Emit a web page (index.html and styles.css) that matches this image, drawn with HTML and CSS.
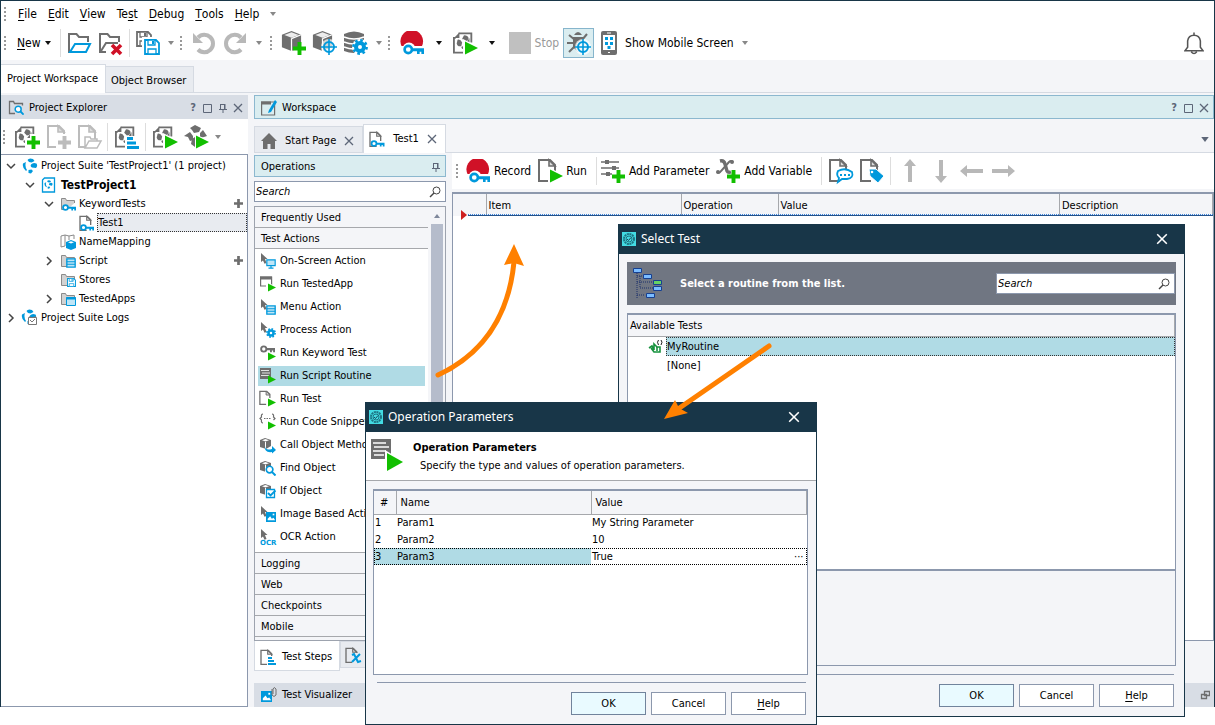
FILE: index.html
```html
<!DOCTYPE html>
<html lang="en">
<head>
<meta charset="utf-8">
<title>TestProject1</title>
<link rel="stylesheet" href="styles.css">
</head>
<body>
<svg class="sprite" aria-hidden="true">
  <defs>
    <symbol id="doc" viewBox="0 0 24 24"><path d="M13 23H3V2h11l5 5v8" fill="none" stroke="currentColor" stroke-width="2"/><path d="M13 2v6h6z" fill="#ddd" stroke="currentColor" stroke-width="1.600"/></symbol>
    <symbol id="key" viewBox="0 0 24 12"><circle cx="6" cy="6" r="4.200" fill="#fff" stroke="currentColor" stroke-width="3"/><path d="M10 4.500h14V11h-3V8.500h-2V11h-3V8h-6z" fill="currentColor"/></symbol>
    <symbol id="play" viewBox="0 0 12 12"><path d="M0 0l12 6-12 6z" fill="#12bf00"/></symbol>
    <symbol id="plus" viewBox="0 0 12 12"><path d="M6 0v12M0 6h12" stroke="currentColor" stroke-width="3.600"/></symbol>
    <symbol id="cube" viewBox="0 0 24 24"><path d="M2 6l10-4 10 4v13l-10 4-10-4z" fill="#6e6e6e"/><path d="M4.500 6.300L12 3.500l7.500 2.800L12 9.200z" fill="#ececec"/><path d="M12 10v13M12 10l10-4" stroke="#fff" stroke-width="1.300"/></symbol>
    <symbol id="target" viewBox="0 0 16 16"><circle cx="8" cy="8" r="8" fill="#fff" opacity=".7"/><circle cx="8" cy="8" r="5" fill="none" stroke="#0099dc" stroke-width="2"/><path d="M8 0v16M0 8h16" stroke="#0099dc" stroke-width="1.600"/></symbol>
    <symbol id="gear" viewBox="0 0 16 16"><circle cx="8" cy="8" r="4" fill="#fff" stroke="#0099dc" stroke-width="4"/><circle cx="8" cy="8" r="6.600" fill="none" stroke="#0099dc" stroke-width="2.600" stroke-dasharray="2.600 2.580"/></symbol>
    <symbol id="folder" viewBox="0 0 24 24"><path d="M21 11V6H12L9.500 3H2v18h6" fill="none" stroke="#6e6e6e" stroke-width="2"/></symbol>
    <symbol id="folder-s" viewBox="0 0 16 16"><path d="M7 13.500H1.500v-11h4l1 2h8V7" fill="#d2d2d2" stroke="#8a8a8a"/></symbol>
    <symbol id="disk" viewBox="0 0 16 16"><path d="M1 1h11l3 3v11H1z" fill="#fff" stroke="currentColor" stroke-width="1.800"/><path d="M4 1h7v5H4zM4 10h8v5H4z" fill="#fff" stroke="currentColor" stroke-width="1.300"/><path d="M8 2h2v3H8z" fill="currentColor"/></symbol>
    <symbol id="suite" viewBox="0 0 24 24"><path d="M11 23H1V7h2M6 2h14v10" fill="none" stroke="#6e6e6e" stroke-width="2"/><path d="M1 7l6-6v6zM12 4q5 0 5 4-1 3-4 3l-3-3zM5 9q3-1 5 3l-1 4q-4 1-5-3zM16 10l2-3v5l-3 3-2-1zM9 17l4-2v3l-3 1z" fill="#6e6e6e"/></symbol>
    <symbol id="swirl" viewBox="0 0 16 16"><path d="M5.500 2Q7-.5 11 1l1.500 2-3 1.500L7 4zM1 5.500L4 4q-1.500 4 1 8l-1 1Q0 10 1 5.500zM9 6.500Q11 4 14.500 5.500 16 8 14 10l-4-.5q-2-1-1-3zM6.500 12l3-.5L11 13l-2 2.500-2.500-.5z" fill="#0099dc"/></symbol>
    <symbol id="cursor" viewBox="0 0 16 16"><path d="M1 0l6.500 6H5l1.500 4-2 .7L3 7.500 1 9z" fill="#6e6e6e"/></symbol>
    <symbol id="scube" viewBox="0 0 16 16"><path d="M0 3l5-2 6 2v6l-5 3-6-2z" fill="#6e6e6e"/><path d="M2 3.200L5.500 2l3.500 1.200L5.500 4.500z" fill="#fff"/><path d="M5.500 5v7" stroke="#fff"/></symbol>
    <symbol id="lines" viewBox="0 0 16 16"><path d="M0 0h11v11H0z" fill="#6e6e6e"/><path d="M1 2.500h8M2 5h8M1 7.500h8" stroke="#fff" stroke-width=".8"/></symbol>
    <symbol id="steps" viewBox="0 0 12 12"><path d="M0 1.500h6M0 6h9M0 10.500h12" stroke="#0099dc" stroke-width="3"/></symbol>
    <symbol id="glass" viewBox="0 0 12 12"><circle cx="7.500" cy="4.500" r="3.500" fill="none" stroke="currentColor"/><path d="M5 7l-4 4" stroke="currentColor" stroke-width="1.500"/></symbol>
    <symbol id="find" viewBox="0 0 12 12"><circle cx="5" cy="5" r="3.600" fill="#fff" stroke="#0099dc" stroke-width="1.800"/><path d="M7.500 7.500l4 4" stroke="#0099dc" stroke-width="2.200"/></symbol>
    <symbol id="record" viewBox="0 0 24 24"><path d="M1.500 15A11.300 11.300 0 1 1 22 15z" fill="#d01127"/><path d="M1 15h22v4H1z" fill="#fff"/><circle cx="9" cy="18" r="6.500" fill="#fff"/><g color="#0099dc"><use href="#key" x="3" y="13" width="21" height="11"/></g></symbol>
    <symbol id="down" viewBox="0 0 6 4"><path d="M0 0h6L3 4z" fill="currentColor"/></symbol>
    <symbol id="x" viewBox="0 0 10 10"><path d="M1 1l8 8M9 1L1 9" stroke="currentColor" stroke-width="1.300"/></symbol>
    <symbol id="box" viewBox="0 0 10 10"><path d="M.5 1.500h8v8h-8z" fill="none" stroke="currentColor"/></symbol>
    <symbol id="pin" viewBox="0 0 10 10"><path d="M2.500 1v5M1 6.500h8M3 1.500h4M5 7v3" stroke="currentColor" fill="none"/><path d="M6 1h1.500v5H6z" fill="currentColor"/></symbol>
    <symbol id="chev" viewBox="0 0 10 10"><path d="M1 3l4 4 4-4" fill="none" stroke="#444" stroke-width="1.500"/></symbol>
    <symbol id="chev-r" viewBox="0 0 10 10"><path d="M3 1l4 4-4 4" fill="none" stroke="#444" stroke-width="1.500"/></symbol>
    <symbol id="app" viewBox="0 0 16 16"><path d="M1 1h14v14H1z" fill="#43dbe3"/><circle cx="8" cy="8" r="5" fill="none" stroke="#1d7483" stroke-width="2" stroke-dasharray="2 .6"/><circle cx="8" cy="8" r="3" fill="none" stroke="#1d7483"/><path d="M6 8l1.500 1.500L10 6.500" fill="none" stroke="#17475a"/></symbol>
    <symbol id="arrow" viewBox="0 0 24 24"><path d="M12 0l6 7h-4v16h-4V7H6z" fill="#b8b8b8"/></symbol>
    <symbol id="undo" viewBox="0 0 24 24"><path d="M6 6.500a8.700 8.700 0 1 1 0 12" fill="none" stroke="#b8b8b8" stroke-width="4"/><path d="M1 2v10h10z" fill="#b8b8b8"/></symbol>
    <symbol id="monitor" viewBox="0 0 12 12"><path d="M1 1h10v7H1z" fill="#bfe5f6" stroke="#0099dc" stroke-width="1.400"/><path d="M6 8v3M3 11h6" stroke="#0099dc" stroke-width="1.400"/></symbol>
    <symbol id="list" viewBox="0 0 12 12"><path d="M1 1h10v10H1z" fill="#bfe5f6" stroke="#0099dc" stroke-width="1.600"/><path d="M1 4.500h10M1 7.500h10" stroke="#0099dc" stroke-width="1.400"/></symbol>
    <symbol id="picture" viewBox="0 0 12 12"><path d="M0 0h12v12H0z" fill="#0099dc"/><path d="M2 8l3-3 2 3 2-1 2 3H2z" fill="#fff"/><path d="M8 2h2v2H8z" fill="#fff"/></symbol>
  </defs>
</svg>

<div class="app">
  <nav class="menubar" aria-label="Main menu">
    <span class="grip"></span>
    <button><u>F</u>ile</button><button><u>E</u>dit</button><button><u>V</u>iew</button><button>Te<u>s</u>t</button><button><u>D</u>ebug</button><button><u>T</u>ools</button><button><u>H</u>elp</button>
    <button class="caret muted" aria-label="More"><svg><use href="#down"/></svg></button>
  </nav>

  <div class="toolbar main-bar" role="toolbar">
    <span class="grip"></span>
    <button class="new"><span><u>N</u>ew</span><svg class="dn"><use href="#down"/></svg></button>
    <span class="sep"></span>
    <button class="ib" aria-label="Open"><svg class="i24"><use href="#folder"/><path d="M3 21l5-8h15l-4 8z" fill="#fff" stroke="#0099dc" stroke-width="2"/></svg></button>
    <button class="ib" aria-label="Close"><svg class="i24"><use href="#folder"/><path d="M3 20l5-8h12" fill="none" stroke="#6e6e6e" stroke-width="2"/><path d="M14 14l9 9M23 14l-9 9" stroke="#d01127" stroke-width="3.600"/></svg></button>
    <span class="sep"></span>
    <button class="ib" aria-label="Save all"><svg class="i24"><g color="#6e6e6e"><use href="#disk" width="16" height="16"/></g><path d="M6 6h18v18H6z" fill="#fff"/><g color="#0099dc"><use href="#disk" x="8" y="8" width="16" height="16"/></g></svg></button>
    <button class="caret muted" aria-label="More"><svg><use href="#down"/></svg></button>
    <span class="grip"></span>
    <button class="ib" aria-label="Undo"><svg class="i24"><use href="#undo"/></svg></button>
    <button class="ib" aria-label="Redo"><svg class="i24 flip"><use href="#undo"/></svg></button>
    <button class="caret muted mid" aria-label="More"><svg><use href="#down"/></svg></button>
    <span class="grip"></span>
    <button class="ib" aria-label="Add object"><svg class="i24 green"><use href="#cube" x="-2" y="-2" width="23" height="23"/><use href="#plus" x="11" y="11" width="13" height="13"/></svg></button>
    <button class="ib" aria-label="Object spy"><svg class="i24"><use href="#cube" x="-2" y="-2" width="23" height="23"/><use href="#target" x="8" y="8" width="16" height="16"/></svg></button>
    <button class="ib" aria-label="Data options"><svg class="i24"><path d="M0 3q10-5 20 0v17q-10 4-20 0z" fill="#6e6e6e"/><path d="M0 6q10 4 20 0M0 11q10 4 20 0M0 16q10 4 20 0" fill="none" stroke="#fff" stroke-width="1.500"/><circle cx="16" cy="16" r="8" fill="#fff"/><use href="#gear" x="8" y="8" width="16" height="16"/></svg></button>
    <button class="caret muted" aria-label="More"><svg><use href="#down"/></svg></button>
    <span class="grip"></span>
    <button class="ib" aria-label="Record"><svg class="i24"><use href="#record"/></svg></button>
    <button class="caret wide" aria-label="Record options"><svg><use href="#down"/></svg></button>
    <button class="ib" aria-label="Run"><svg class="i24"><use href="#suite" x="0" y="0" width="22" height="23"/><path d="M10 8l16 8-16 9z" fill="#fff"/><use href="#play" x="12" y="10" width="13" height="14"/></svg></button>
    <button class="caret wide" aria-label="Run options"><svg><use href="#down"/></svg></button>
    <button class="stop" disabled><span class="square"></span>Stop</button>
    <button class="toggle" aria-label="Debugging" aria-pressed="true"><svg class="i24"><path d="M7 4q4-6 8 0zM6 6h10v10l-5 5-5-5z" fill="#6e6e6e"/><path d="M2 4l6 5M0 12h8M2 21l6-6M20 3l-5 6" stroke="#6e6e6e" stroke-width="2"/><circle cx="16" cy="16" r="7" fill="#daedf0"/><use href="#target" x="8" y="8" width="16" height="16"/></svg></button>
    <button class="mobile"><svg class="phone" viewBox="0 0 16 24"><rect width="16" height="24" rx="2" fill="#6e6e6e"/><path d="M2 4h12v15H2z" fill="#fff"/><path d="M6 2h4M7 21.500h2" stroke="#fff"/><path d="M4 6h3v3H4zM9 6h3v3H9zM4 11h3v3H4zM9 11h3v3H9zM6.500 15h3v3h-3z" fill="#0099dc"/></svg>Show Mobile Screen</button>
    <button class="caret muted wide" aria-label="More"><svg><use href="#down"/></svg></button>
    <button class="bell" aria-label="Notifications"><svg viewBox="0 0 22 24"><path d="M1 20h20l-3-4V9q-1-6-7-6T4 9v7zM11 3V0M8 21q3 4 6 0" fill="none" stroke="#555" stroke-width="1.700"/></svg></button>
  </div>

  <div class="view-tabs" role="tablist">
    <button class="vtab active" role="tab" aria-selected="true">Project Workspace</button>
    <button class="vtab" role="tab" aria-selected="false">Object Browser</button>
  </div>

  <div class="body">
    <aside class="explorer">
      <header class="phead">
        <svg class="i16"><path d="M7 13.500H1.500v-12h4l1 2h8v2" fill="none" stroke="#6e6e6e" stroke-width="1.300"/><use href="#find" x="6" y="5" width="10" height="10"/></svg>
        <h2>Project Explorer</h2>
        <span class="tools"><button aria-label="Help"><b>?</b></button><button aria-label="Maximize"><svg><use href="#box"/></svg></button><button aria-label="Pin"><svg><use href="#pin"/></svg></button><button aria-label="Close"><svg><use href="#x"/></svg></button></span>
      </header>
      <div class="toolbar ex-bar" role="toolbar">
        <span class="grip"></span>
        <button class="ib" aria-label="New project"><svg class="i24 green"><use href="#suite" width="22" height="23"/><path d="M10 13h5v-4h6v16H10z" fill="#fff"/><use href="#plus" x="12" y="11" width="13" height="13"/></svg></button>
        <button class="ib" aria-label="New item"><svg class="i24 pale"><use href="#doc" x="-1" y="-1" width="24" height="24"/><path d="M10 13h5v-4h6v16H10z" fill="#fff"/><use href="#plus" x="12" y="11" width="13" height="13"/></svg></button>
        <button class="ib" aria-label="Existing item"><svg class="i24 pale"><use href="#doc" x="-1" y="-1" width="24" height="24"/><path d="M8 23V12h5l1 2h6v2M8 23l4-7h12l-4 7z" fill="#fff" stroke="currentColor" stroke-width="1.500"/></svg></button>
        <span class="sep"></span>
        <button class="ib" aria-label="Execution plan"><svg class="i24"><use href="#suite" width="22" height="23"/><path d="M10 11h14v13H10z" fill="#fff"/><use href="#steps" x="12" y="12" width="12" height="12"/></svg></button>
        <span class="sep"></span>
        <button class="ib" aria-label="Run project"><svg class="i24"><use href="#suite" width="22" height="23"/><path d="M10 8l16 8-16 9z" fill="#fff"/><use href="#play" x="12" y="10" width="13" height="14"/></svg></button>
        <button class="ib" aria-label="Run suite"><svg class="i24"><path d="M6 3l5-3 6 3-2 4-5 1-2-3zM0 11l6-4 3 4v4l-3 1-2-4zM16 8l3-3 4 6-3 1-4 1zM8 14l3-2v10l-4-3z" fill="#6e6e6e"/><path d="M11 9l15 7-15 9z" fill="#fff"/><use href="#play" x="12" y="10" width="13" height="14"/></svg></button>
        <button class="caret muted" aria-label="More"><svg><use href="#down"/></svg></button>
      </div>
      <ul class="tree" role="tree">
        <li class="l0" role="treeitem"><svg class="tw"><use href="#chev"/></svg><svg class="i16"><use href="#swirl"/></svg><span>Project Suite 'TestProject1' (1 project)</span></li>
        <li class="l1" role="treeitem"><svg class="tw"><use href="#chev"/></svg><svg class="i16"><path d="M1.500 3l2-2h10v14h-12z" fill="#fff" stroke="#0099dc" stroke-width="1.300"/><use href="#swirl" x="3" y="3" width="9" height="9"/></svg><strong>TestProject1</strong></li>
        <li class="l2" role="treeitem"><svg class="tw"><use href="#chev"/></svg><svg class="i16 blue"><use href="#folder-s"/><use href="#key" x="2" y="8" width="14" height="7"/></svg><span>KeywordTests</span><button class="add" aria-label="Add keyword test"><svg><use href="#plus"/></svg></button></li>
        <li class="l3" role="treeitem"><i class="tw"></i><svg class="i16 blue"><g color="#6e6e6e"><use href="#doc"/></g><use href="#key" x="2" y="9" width="14" height="7"/></svg><span class="sel">Test1</span></li>
        <li class="l2" role="treeitem"><i class="tw"></i><svg class="i16"><path d="M1 2l4-1 4 1 5-1v4M1 2v11l4-1V1M9 2v4" fill="none" stroke="#8a8a8a"/><path d="M6 8l5-2 5 2v6l-5 2-5-2z" fill="#0099dc"/><path d="M8 8.200l3-1 3 1-3 1.200z" fill="#fff"/></svg><span>NameMapping</span></li>
        <li class="l2" role="treeitem"><svg class="tw"><use href="#chev-r"/></svg><svg class="i16"><use href="#folder-s"/><use href="#list" x="6" y="5" width="10" height="10"/></svg><span>Script</span><button class="add" aria-label="Add script"><svg><use href="#plus"/></svg></button></li>
        <li class="l2" role="treeitem"><i class="tw"></i><svg class="i16 blue"><use href="#folder-s"/><use href="#disk" x="7" y="6" width="9" height="9"/></svg><span>Stores</span></li>
        <li class="l2" role="treeitem"><svg class="tw"><use href="#chev-r"/></svg><svg class="i16"><use href="#folder-s"/><path d="M6.500 6.500h9v8h-9z" fill="#bfe5f6" stroke="#0099dc"/><path d="M6 7.500h10" stroke="#0099dc" stroke-width="2"/></svg><span>TestedApps</span></li>
        <li class="l0" role="treeitem"><svg class="tw"><use href="#chev-r"/></svg><svg class="i16"><use href="#swirl" x="-1" y="-1"/><path d="M6.500 7.500h8v7h-8z" fill="#fff" stroke="#777"/><path d="M8 10l2 2 3-3M8 6v2M13 6v2" fill="none" stroke="#777"/></svg><span>Project Suite Logs</span></li>
      </ul>
    </aside>

    <main class="workspace">
      <header class="phead active">
        <svg class="i16"><path d="M.6 2h13v13H.6z" fill="none" stroke="#6e6e6e" stroke-width="1.200"/><path d="M0 3h10" stroke="#6e6e6e" stroke-width="3"/><path d="M14 0l2 2-6 10-3 1 1-3z" fill="#0099dc"/></svg>
        <h2>Workspace</h2>
        <span class="tools"><button aria-label="Help"><b>?</b></button><button aria-label="Maximize"><svg><use href="#box"/></svg></button><button aria-label="Close"><svg><use href="#x"/></svg></button></span>
      </header>
      <div class="doc-tabs" role="tablist">
        <div class="dtab" role="tab"><svg class="i16"><path d="M8 0l8 8h-2v8H9.500v-5h-3v5H2V8H0z" fill="#6e6e6e"/></svg><span>Start Page</span><button aria-label="Close Start Page"><svg><use href="#x"/></svg></button></div>
        <div class="dtab active" role="tab" aria-selected="true"><svg class="i16 blue"><g color="#6e6e6e"><use href="#doc" x="-1"/></g><use href="#key" x="1" y="9" width="15" height="7"/></svg><span>Test1</span><button aria-label="Close Test1"><svg><use href="#x"/></svg></button></div>
        <button class="tab-menu" aria-label="Tab list"><svg><use href="#down"/></svg></button>
      </div>

      <div class="split">
        <section class="operations">
          <header class="ops-head"><h2>Operations</h2><button aria-label="Pin"><svg><use href="#pin"/></svg></button></header>
          <label class="search"><input type="text" placeholder="Search" aria-label="Search operations"><svg><use href="#glass"/></svg></label>
          <div class="ops-list">
            <div class="ops-content">
              <h3>Frequently Used</h3>
              <h3>Test Actions</h3>
              <ul>
                <li><svg class="i16"><use href="#cursor"/><use href="#monitor" x="6" y="6" width="10" height="10"/></svg>On-Screen Action</li>
                <li><svg class="i16"><path d="M.6 1h11v9H.6z" fill="none" stroke="#6e6e6e" stroke-width="1.200"/><path d="M0 2h12" stroke="#6e6e6e" stroke-width="3"/><path d="M6 5l10 6-10 5z" fill="#fff"/><use href="#play" x="8" y="7" width="8" height="9"/></svg>Run TestedApp</li>
                <li><svg class="i16"><use href="#cursor"/><use href="#list" x="6" y="6" width="10" height="10"/></svg>Menu Action</li>
                <li><svg class="i16"><use href="#cursor"/><use href="#gear" x="6" y="6" width="10" height="10"/></svg>Process Action</li>
                <li><svg class="i16"><g color="#6e6e6e"><use href="#key" width="15" height="8"/></g><use href="#play" x="8" y="7" width="8" height="9"/></svg>Run Keyword Test</li>
                <li class="on"><svg class="i16"><use href="#lines"/><use href="#play" x="8" y="7" width="8" height="9"/></svg>Run Script Routine</li>
                <li><svg class="i16"><use href="#doc" x="-2" y="-1" width="15" height="15"/><path d="M7 7h8v8H7z" fill="#fff"/><use href="#play" x="8" y="7" width="8" height="9"/></svg>Run Test</li>
                <li><svg class="i16"><path d="M3 0Q1 0 1.500 3L0 4.500 1.500 6Q1 9 3 9M12 0q2 0 1.500 3L15 4.500 13.500 6M4 4.500h1.500m1 0H8m1 0h1.500" fill="none" stroke="#6e6e6e" stroke-width="1.200"/><use href="#play" x="8" y="7" width="8" height="9"/></svg>Run Code Snippet</li>
                <li><svg class="i16"><use href="#scube"/><path d="M5 9q0 5 7 3V9l4 4-4 3.500V15q-8 1-7-6z" fill="#0099dc"/></svg>Call Object Method</li>
                <li><svg class="i16"><use href="#scube"/><use href="#find" x="5" y="5" width="11" height="11"/></svg>Find Object</li>
                <li><svg class="i16"><use href="#scube"/><path d="M6.500 6.500h8v8h-8z" fill="#fff" stroke="#0099dc" stroke-width="1.300"/><path d="M8 10l2.500 2.500 5-5" fill="none" stroke="#0099dc" stroke-width="1.800"/></svg>If Object</li>
                <li><svg class="i16"><use href="#cursor"/><use href="#picture" x="6" y="6" width="10" height="10"/></svg>Image Based Action</li>
                <li><svg class="i16"><use href="#cursor"/><text x="0" y="16" class="ocr">OCR</text></svg>OCR Action</li>
              </ul>
              <h3>Logging</h3><h3>Web</h3><h3>Checkpoints</h3><h3>Mobile</h3>
            </div>
            <div class="scroll"><svg><path d="M0 4h6L3 0z" fill="#7e879b"/></svg><span></span></div>
          </div>
          <div class="step-tabs" role="tablist">
            <button class="stab active" role="tab" aria-selected="true"><svg class="i16"><use href="#doc" x="-1"/><path d="M7 7h9v9H7z" fill="#fff"/><use href="#steps" x="8" y="8" width="8" height="8"/></svg>Test Steps</button>
            <button class="stab" role="tab" aria-label="Variables"><svg class="i16"><use href="#doc" x="-1"/><path d="M7 6h9v10H7z" fill="#e8ebf0"/><path d="M7 8l2-1 4 8 3-1M15 7l-8 8" fill="none" stroke="#0099dc" stroke-width="2"/></svg></button>
          </div>
        </section>

        <section class="editor">
          <div class="toolbar ed-bar" role="toolbar">
            <span class="grip"></span>
            <button class="tb"><svg class="i24"><use href="#record"/></svg>Record</button>
            <button class="tb"><svg class="i24"><use href="#doc" x="-2" y="-1"/><path d="M10 8l16 8-16 9z" fill="#fff"/><use href="#play" x="12" y="10" width="13" height="14"/></svg>Run</button>
            <span class="sep"></span>
            <button class="tb"><svg class="i24 green"><path d="M0 3h18M0 9h18M0 15h11" stroke="#6e6e6e" stroke-width="1.600"/><path d="M4 1h4v4H4zM11 7h4v4h-4zM5 13h4v4H5z" fill="#6e6e6e"/><use href="#plus" x="11" y="11" width="13" height="13"/></svg>Add Parameter</button>
            <button class="tb"><svg class="i24 green"><path d="M1 13q2 2 4-1l8-9q2-2 4 0" fill="none" stroke="#6e6e6e" stroke-width="2"/><path d="M4 2q4-1 5 3l2 7q1 2 4 1" fill="none" stroke="#6e6e6e" stroke-width="3.400"/><circle cx="2" cy="13" r="2" fill="#6e6e6e"/><circle cx="16" cy="3" r="2" fill="#6e6e6e"/><use href="#plus" x="11" y="11" width="13" height="13"/></svg>Add Variable</button>
            <span class="sep"></span>
            <button class="ib" aria-label="Add description"><svg class="i24"><use href="#doc" x="-2" y="-1"/><path d="M9 12q7-4 14 1 2 6-5 7h-5l-4 3 1-4q-3-3-1-7z" fill="#fff" stroke="#0099dc" stroke-width="1.800"/><path d="M11 16h2m2 0h2m2 0h2" stroke="#0099dc" stroke-width="2"/></svg></button>
            <button class="ib" aria-label="Add label"><svg class="i24"><use href="#doc" x="-2" y="-1"/><path d="M9 10h7l8 7-6 7-8-7z" fill="#0099dc" stroke="#fff"/><circle cx="12" cy="13" r="1.300" fill="#fff"/></svg></button>
            <span class="sep"></span>
            <button class="ib" aria-label="Move up"><svg class="i24"><use href="#arrow"/></svg></button>
            <button class="ib" aria-label="Move down"><svg class="i24 r180"><use href="#arrow"/></svg></button>
            <button class="ib" aria-label="Move left"><svg class="i24 r270"><use href="#arrow"/></svg></button>
            <button class="ib" aria-label="Move right"><svg class="i24 r90"><use href="#arrow"/></svg></button>
          </div>
          <div class="steps">
            <table>
              <colgroup><col class="c-mark"><col class="c-item"><col class="c-op"><col><col class="c-desc"></colgroup>
              <thead><tr><th aria-label="Marker"></th><th>Item</th><th>Operation</th><th>Value</th><th>Description</th></tr></thead>
            </table>
            <div class="insert"><svg viewBox="0 0 6 10"><path d="M0 0l6 5-6 5z" fill="#cf2121"/></svg></div>
          </div>
        </section>
      </div>
      <footer class="visualizer"><svg class="i16"><use href="#picture" y="4" width="11" height="11"/><path d="M11 2v6q2 3 4 0V2q-2-3-3 0v5" fill="none" stroke="#6e6e6e"/></svg><span>Test Visualizer</span><button aria-label="Restore"><svg><path d="M4.500 1.500h5v4h-5zM1.500 4.500h5v4h-5z" fill="none" stroke="currentColor" stroke-width="1.300"/></svg></button></footer>
    </main>
  </div>
</div>

<section class="dialog select-dlg" role="dialog" aria-labelledby="t1">
  <header class="title"><svg class="i16"><use href="#app"/></svg><h1 id="t1">Select Test</h1><button aria-label="Close"><svg><use href="#x"/></svg></button></header>
  <div class="dlg-body">
    <div class="banner">
      <svg class="routine"><path d="M5 6v26M5 9h8M8 9v12h14M5 15h16M5 28h8" fill="none" stroke="#1b2f6b" stroke-dasharray="1 1"/><path d="M1.500 1.500h8v4h-8zM11.500 7.500h8v4h-8zM21.500 19.500h8v4h-8zM14.500 26.500h8v4h-8z" fill="#7bbcff" stroke="#174090"/><path d="M21.500 13.500h8v4h-8z" fill="#65d264" stroke="#174090"/></svg>
      <strong>Select a routine from the list.</strong>
      <label class="search"><input type="text" placeholder="Search" aria-label="Search routines"><svg><use href="#glass"/></svg></label>
    </div>
    <div class="avail">
      <h3>Available Tests</h3>
      <ul role="listbox">
        <li role="option" aria-selected="true"><svg class="i16"><path d="M1 9l3-2 2 4V5l3 3v4M3 9l3 4 6 0V8L8 8" fill="none" stroke="#17923e" stroke-width="1.600"/><path d="M10.500 1q-2 2 0 5M13 1q2 2 0 5" fill="none" stroke="#222"/></svg><span>MyRoutine</span></li>
        <li role="option"><i class="i16"></i><span>[None]</span></li>
      </ul>
      <div class="note"></div>
    </div>
    <div class="buttons"><button class="default">OK</button><button>Cancel</button><button><u>H</u>elp</button></div>
  </div>
</section>

<section class="dialog param-dlg" role="dialog" aria-labelledby="t2">
  <header class="title"><svg class="i16"><use href="#app"/></svg><h1 id="t2">Operation Parameters</h1><button aria-label="Close"><svg><use href="#x"/></svg></button></header>
  <div class="intro">
    <svg viewBox="0 0 34 34"><path d="M1 1h20v20H1z" fill="#6e6e6e"/><path d="M3 5h13M4 9h15M3 13h13M4 17h10" stroke="#fff" stroke-width="1.300"/><path d="M15 12l20 12-20 10z" fill="#fff"/><path d="M17 15l16 9-16 9z" fill="#12bf00"/></svg>
    <div><strong>Operation Parameters</strong><p>Specify the type and values of operation parameters.</p></div>
  </div>
  <div class="dlg-body">
    <div class="grid">
      <table>
        <colgroup><col class="p-num"><col class="p-name"><col></colgroup>
        <thead><tr><th>#</th><th>Name</th><th>Value</th></tr></thead>
        <tbody>
          <tr><td>1</td><td>Param1</td><td>My String Parameter</td></tr>
          <tr><td>2</td><td>Param2</td><td>10</td></tr>
          <tr class="cur"><td>3</td><td>Param3</td><td><span class="cell">True<button aria-label="Edit value">···</button></span></td></tr>
        </tbody>
      </table>
    </div>
    <div class="buttons"><button class="default">OK</button><button>Cancel</button><button><u>H</u>elp</button></div>
  </div>
</section>

<svg class="flow" aria-hidden="true">
  <path d="M438 375Q506 343 514 262" fill="none" stroke="#ff8000" stroke-width="5" stroke-linecap="round"/>
  <path d="M514 244l10 22-10-3-10 2z" fill="#ff8000"/>
  <path d="M769 346L678 409" fill="none" stroke="#ff8000" stroke-width="5" stroke-linecap="round"/>
  <path d="M664 419l11-19 4 8 9 5z" fill="#ff8000"/>
</svg>
</body>
</html>
```
FILE: styles.css
```css
:root {
  --navy: #183648;
  --line: #8c98ad;
  --soft: #d5dae2;
  --bg: #f4f5f8;
  --aqua: #daedf0;
  --sel: #b0dbe5;
  --grey: #6e6e6e;
}
* { box-sizing: border-box; }
body {
  margin: 0;
  position: relative;
  min-height: 100vh;
  overflow: hidden;
  background: #fff;
  color: #000;
  font: 11px/16px "DejaVu Sans Condensed", "DejaVu Sans", sans-serif;
}
button, input { font: inherit; color: inherit; margin: 0; padding: 0; border: 0; background: none; }
button { display: flex; align-items: center; justify-content: center; white-space: nowrap; }
u { text-underline-offset: 2px; }
h1, h2, h3, p, ul { margin: 0; padding: 0; font: inherit; list-style: none; }
svg { display: block; flex: none; color: var(--grey); }
.sprite { position: absolute; width: 0; height: 0; }
.i16 { width: 16px; height: 16px; flex: none; overflow: visible; }
.i24 { width: 24px; height: 24px; overflow: visible; }
.blue { color: #0099dc; }
.green { color: #12bf00; }
.pale { color: #bcbcbc; }
.flip { transform: scaleX(-1); }
.r90 { transform: rotate(90deg); }
.r180 { transform: rotate(180deg); }
.r270 { transform: rotate(270deg); }

.app {
  display: flex;
  flex-direction: column;
  height: calc(100vh - 18px);
  border: 1px solid var(--navy);
  border-bottom: 0;
  background: var(--bg);
}
.grip {
  flex: none;
  width: 11px;
  height: 14px;
  background: repeating-linear-gradient(#999 0 2px, transparent 2px 4px) 2px 0 / 2px 100% no-repeat;
}
.sep { flex: none; width: 7px; height: 28px; background: linear-gradient(#ddd, #ddd) center / 1px 100% no-repeat; }
.menubar, .toolbar { display: flex; align-items: center; background: #fff; font-size: 12px; }
.menubar { height: 25px; padding-left: 1px; }
.menubar button { padding: 0 6px 0 5px; }
.menubar .caret { padding: 0; width: 16px; }
.main-bar { height: 34px; padding-left: 1px; }
.new { gap: 4px; padding: 0 6px 0 4px; }
.dn, .caret svg { width: 6px; height: 4px; color: #111; }
.muted svg { color: #888; }
.ib { width: 31px; height: 30px; flex: none; }
.caret { width: 14px; height: 24px; flex: none; }
.caret.mid { width: 17px; }
.caret.wide { width: 22px; }
.stop { gap: 4px; padding: 0 4px 0 6px; color: #999; }
.square { width: 22px; height: 22px; background: #c0c0c0; }
.toggle { width: 31px; height: 30px; background: var(--aqua); border: 1px solid #86b5cc; }
.mobile { gap: 8px; padding-left: 7px; }
.phone { width: 16px; height: 24px; }
.bell { margin-left: auto; padding-right: 10px; }
.bell svg { width: 20px; height: 23px; }

.view-tabs { display: flex; align-items: flex-end; height: 33px; border-bottom: 1px solid var(--soft); }
.vtab { height: 26px; padding: 2px 7px 0 5px; background: #e8ebf0; border: 1px solid var(--soft); border-bottom: 0; border-left: 0; }
.vtab.active { height: 29px; margin-bottom: -1px; padding: 0 7px 0 6px; background: #fff; }
.body { flex: 1; min-height: 0; display: flex; gap: 6px; padding-top: 2px; }

.phead { display: flex; align-items: center; flex: none; gap: 5px; height: 24px; padding: 1px 4px 0 6px; background: #d8dde5; border: 1px solid #d8dde5; }
.phead.active { background: var(--aqua); border-color: #8cb8cf; }
.tools { display: flex; gap: 5px; margin-left: auto; color: #5d6678; }
.tools button { width: 10px; height: 12px; }
.tools svg, .dtab button svg, .ops-head button svg { width: 10px; height: 10px; color: #5d6678; }

.explorer { flex: none; width: 247px; display: flex; flex-direction: column; }
.ex-bar { height: 35px; }
.ex-bar .grip { width: 10px; }
.tree { flex: 1; padding: 1px 0 0 5px; background: #fff; border: 1px solid var(--line); border-left: 0; }
.tree li { display: flex; align-items: center; gap: 3px; height: 19px; }
.tw { flex: none; width: 10px; height: 10px; margin-right: 3px; }
.l1 { padding-left: 19px; }
.l2 { padding-left: 38px; }
.l3 { padding-left: 56px; }
.tree strong { margin-left: 1px; font-size: 12px; }
.sel { flex: 1; height: 19px; line-height: 17px; border: 1px dotted #333; background: #e8ebf0; }
.add { margin-left: auto; padding-right: 4px; }
.add svg { width: 9px; height: 9px; }

.workspace { flex: 1; min-width: 0; display: flex; flex-direction: column; }
.doc-tabs { display: flex; flex: none; align-items: flex-end; height: 34px; border-bottom: 1px solid var(--soft); }
.dtab { display: flex; align-items: center; gap: 8px; height: 26px; padding: 2px 8px 0 6px; background: #e8ebf0; border: 1px solid var(--soft); border-bottom: 0; }
.dtab.active { height: 29px; margin-bottom: -1px; background: #fff; padding: 0 8px 0 5px; }
.tab-menu { align-self: center; margin-left: auto; padding: 8px 4px 0 0; }
.tab-menu svg { width: 10px; height: 5px; color: #5d6678; }
.split { flex: 1; min-height: 0; display: flex; gap: 6px; }
.operations { flex: none; width: 192px; padding-top: 2px; display: flex; flex-direction: column; }
.ops-head { display: flex; flex: none; align-items: center; justify-content: space-between; height: 22px; padding: 1px 4px 0 6px; background: var(--aqua); border: 1px solid #8cb8cf; }
.search { display: flex; flex: none; align-items: center; height: 21px; padding: 0 4px 0 1px; background: #fff; border: 1px solid var(--line); }
.search input { flex: 1; min-width: 0; outline: 0; }
.search input::placeholder { color: #000; font-style: italic; opacity: 1; }
.search svg { width: 12px; height: 12px; color: #444; }
.operations .search { margin: 4px 0; }
.ops-list { flex: 1; min-height: 0; display: flex; overflow: hidden; border: 1px solid #9da3ae; }
.ops-content { flex: 1; }
.ops-content h3 { height: 21px; padding: 3px 6px 1px; border-bottom: 1px solid #a6a8ac; }
.ops-content ul { padding: 1px 3px 2px; background: #fff; border-bottom: 1px solid #a6a8ac; }
.ops-content li { display: flex; align-items: center; gap: 4px; height: 20px; margin: 0 0 3px; padding-left: 2px; white-space: nowrap; }
.ops-content li:first-child { margin-top: 1px; }
.ops-content .on { background: var(--sel); }
.ocr { font: bold 7px "DejaVu Sans", sans-serif; fill: #0099dc; }
.scroll { display: flex; flex-direction: column; align-items: center; gap: 6px; width: 17px; padding-top: 7px; }
.scroll svg { width: 6px; height: 4px; }
.scroll span { flex: 1; width: 12px; background: #b5bccb; }
.step-tabs { display: flex; flex: none; height: 31px; }
.stab { align-self: flex-start; gap: 6px; height: 27px; padding: 0 6px 0 4px; background: #e8ebf0; border: 1px solid var(--soft); }
.stab.active { height: 30px; padding: 2px 7px 0 5px; background: #fff; border-top: 0; }
.visualizer { display: flex; flex: none; align-items: center; gap: 5px; height: 24px; margin-top: 11px; padding: 0 4px 0 7px; background: #d8dde5; }
.visualizer button { margin-left: auto; }
.visualizer button svg { width: 10px; height: 10px; }

.editor { flex: 1; min-width: 0; display: flex; flex-direction: column; gap: 3px; padding-bottom: 31px; }
.ed-bar { flex: none; height: 36px; padding-left: 2px; }
.tb { gap: 4px; padding: 0 6px 0 1px; }
.steps { flex: 1; position: relative; background: #fff; border: 1px solid var(--line); border-top-width: 2px; }
table { width: 100%; table-layout: fixed; border-collapse: collapse; }
th { text-align: left; font-weight: normal; background: var(--bg); }
.steps th { height: 22px; padding: 2px 2px 0; border-right: 1px solid #a6a8ac; }
.c-mark { width: 33px; }
.c-item { width: 195px; }
.c-op { width: 97px; }
.c-desc { width: 153px; }
.insert { position: absolute; top: 16px; left: 8px; right: 0; display: flex; align-items: center; gap: 1px; }
.insert svg { width: 6px; height: 10px; }
.insert::after { content: ""; flex: 1; border-top: 1px dotted #3f86dd; border-bottom: 1px solid #24528a; }

.dialog { position: absolute; display: flex; flex-direction: column; background: var(--bg); border: 1px solid var(--navy); border-top: 0; }
.select-dlg { left: 618px; top: 224px; width: 567px; height: 493px; }
.param-dlg { left: 365px; top: 402px; width: 452px; height: 323px; }
.title { display: flex; flex: none; align-items: center; gap: 4px; height: 30px; padding: 0 16px 0 2px; background: var(--navy); color: #fff; font: 12px/16px "Noto Sans", "Open Sans", sans-serif; }
.title button { margin-left: auto; }
.title button svg { width: 12px; height: 12px; color: #fff; }
.dlg-body { flex: 1; min-height: 0; display: flex; flex-direction: column; padding: 8px 8px 9px; }
.banner { display: flex; flex: none; align-items: center; height: 43px; padding: 0 1px 0 5px; background: #707682; color: #fff; }
.banner strong { margin-left: 16px; }
.banner .search { width: 179px; margin-left: auto; color: #000; }
.routine { width: 32px; height: 33px; }
.avail { flex: 1; display: flex; flex-direction: column; margin-top: 8px; border: 1px solid var(--line); border-top-width: 2px; background: #fff; }
.avail h3 { height: 22px; padding: 3px 2px 2px; background: var(--bg); border-bottom: 1px solid #a6a8ac; border-right: 1px solid #a6a8ac; }
.avail ul { flex: 1; }
.avail li { display: flex; align-items: center; height: 19px; padding-left: 20px; gap: 2px; }
.avail li span { flex: 1; height: 19px; line-height: 19px; padding-left: 1px; }
.avail li[aria-selected] span { line-height: 17px; background: var(--sel); border: 1px dotted #333; padding: 0; }
.note { height: 96px; border-top: 2px solid var(--line); background: var(--bg); }
.buttons { display: flex; flex: none; justify-content: flex-end; gap: 5px; margin: 8px 2px 0 0; padding-top: 9px; border-top: 1px solid var(--line); }
.buttons button { width: 75px; height: 23px; background: #fff; border: 1px solid var(--line); }
.buttons .default { background: #e9faff; border-color: #71839c; }
.param-dlg .buttons { margin: 7px 2px 0 4px; }
.intro { display: flex; flex: none; gap: 9px; height: 49px; padding: 6px 4px; background: #fff; border-bottom: 1px solid #a6a8ac; }
.intro svg { width: 34px; height: 34px; }
.intro strong { display: block; line-height: 19px; }
.intro p { padding-left: 7px; line-height: 18px; }
.param-dlg .dlg-body { padding-left: 7px; }
.grid { flex: 1; background: #fff; border: 1px solid var(--line); border-top-width: 2px; }
.grid th { height: 23px; padding: 1px 4px 0; border: 1px solid #a6a8ac; border-top: 0; }
.grid th:first-child { border-left: 0; padding-left: 6px; }
.grid td { height: 17px; padding: 0 1px; line-height: 15px; }
.p-num { width: 22px; }
.p-name { width: 195px; }
.cur { outline: 1px dotted #000; outline-offset: -1px; }
.cur td { background: var(--sel); }
.cur td:last-child { background: #fff; }
.cell { display: flex; justify-content: space-between; }
.cell button { height: 15px; padding-right: 2px; }
.flow { position: absolute; top: 0; left: 0; width: 100%; height: 100%; pointer-events: none; }
```
